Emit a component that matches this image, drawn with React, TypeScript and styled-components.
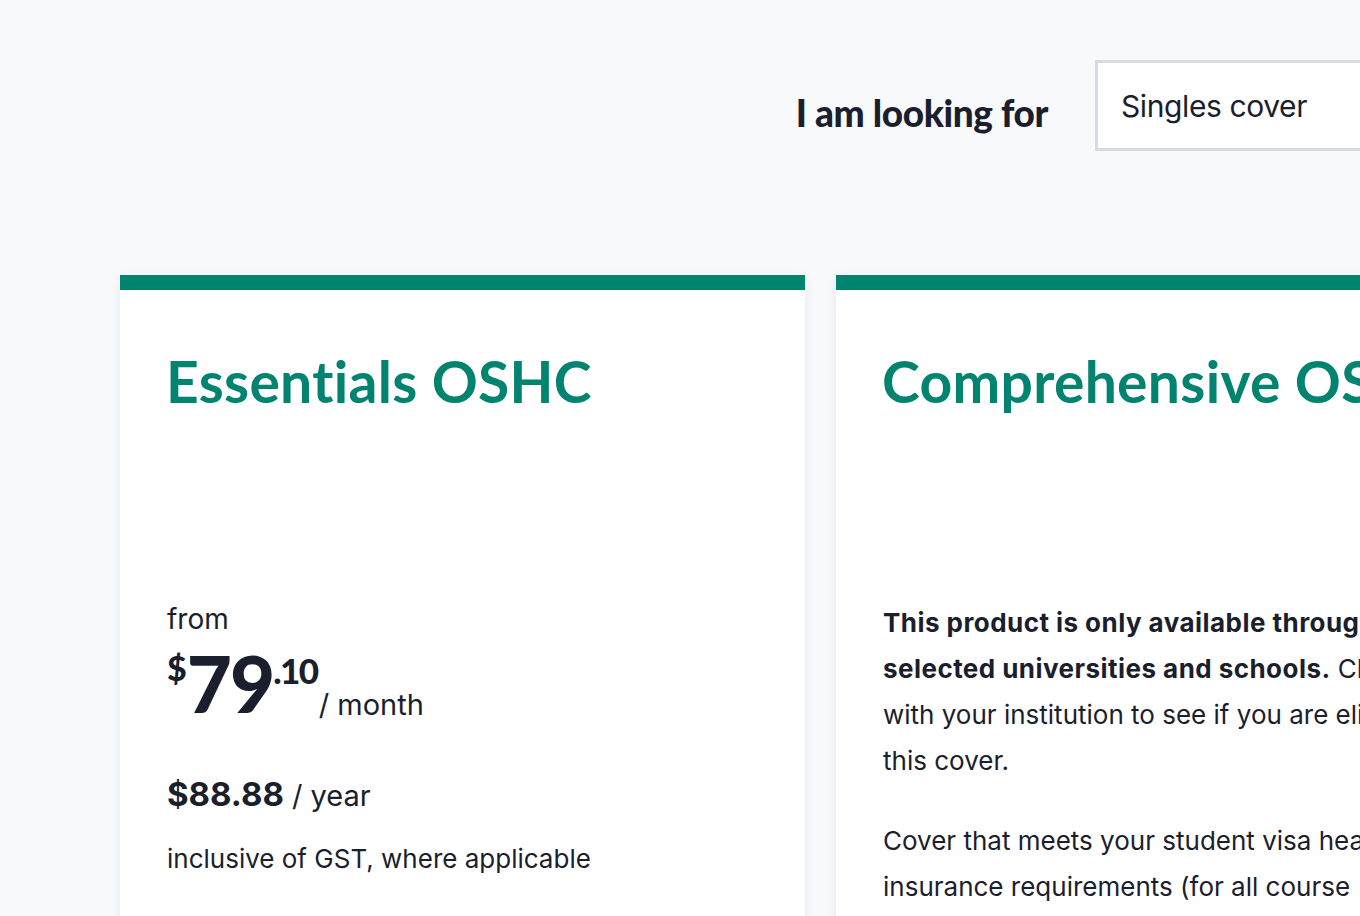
import React from "react";
import styled, { createGlobalStyle } from "styled-components";

const GlobalStyle = createGlobalStyle`
    html, body {
        margin: 0;
        padding: 0;
        background: #f8f9fb;
        overflow: hidden;
    }
    body {
        font-family: Inter, "Liberation Sans", sans-serif;
        color: #1b1e2d;
    }
    * {
        box-sizing: border-box;
    }
`;

type Plan = {
    id: string;
    name: string;
};

const plans: Plan[] = [
    { id: "essentials", name: "Essentials OSHC" },
    { id: "comprehensive", name: "Comprehensive OSHC" },
];

export default function App() {
    return (
        <>
            <GlobalStyle />
            <Page>
                <FilterRow>
                    <FilterLabel>I am looking for</FilterLabel>
                    <CoverSelect>Singles cover</CoverSelect>
                </FilterRow>
                <CardGrid>
                    <PlanCard>
                        <TitleBlock>
                            <PlanTitle>{plans[0].name}</PlanTitle>
                        </TitleBlock>
                        <EssentialsPrice />
                    </PlanCard>
                    <PlanCard>
                        <TitleBlock>
                            <PlanTitle>{plans[1].name}</PlanTitle>
                        </TitleBlock>
                        <Description>
                            <strong>
                                This product is only available through selected
                                universities and schools.
                            </strong>{" "}
                            Check with your institution to see if you are eligible
                            for this cover.
                        </Description>
                        <Description>
                            Cover that meets your student visa health insurance
                            requirements (for all course durations).
                        </Description>
                    </PlanCard>
                </CardGrid>
            </Page>
        </>
    );
}

function EssentialsPrice() {
    return (
        <PriceBlock>
            <FromLabel>from</FromLabel>
            <MonthRow>
                <Dollar>$</Dollar>
                <Whole>79</Whole>
                <Cents>.10</Cents>
                <Period>/ month</Period>
            </MonthRow>
            <YearRow>
                <YearAmount>$88.88</YearAmount>
                <YearPeriod>/ year</YearPeriod>
            </YearRow>
            <TaxNote>inclusive of GST, where applicable</TaxNote>
        </PriceBlock>
    );
}

const Page = styled.div`
    width: 1521px;
    padding: 60px 0 0 120px;
`;

// 상단 필터
const FilterRow = styled.div`
    display: flex;
    justify-content: flex-end;
    align-items: center;
    gap: 47px;
`;

const FilterLabel = styled.div`
    font-family: Lato, "Liberation Sans", sans-serif;
    font-weight: 900;
    font-size: 37px;
    letter-spacing: -0.4px;
    margin-top: 14px;
`;

const CoverSelect = styled.div`
    width: 426px;
    height: 91px;
    display: flex;
    align-items: center;
    padding: 0 23px;
    background: #ffffff;
    border: 3px solid #d8dae2;
    font-size: 30px;
    letter-spacing: -0.4px;
`;

// 플랜 카드
const CardGrid = styled.div`
    display: grid;
    grid-template-columns: 685px 685px;
    gap: 31px;
    margin-top: 124px;
`;

const PlanCard = styled.div`
    background: #ffffff;
    border-top: 15px solid #00836f;
    box-shadow: 0 2px 10px rgba(30, 40, 70, 0.08);
    padding: 57px 47px 40px;
    min-height: 700px;
`;

const TitleBlock = styled.div`
    height: 253px;
`;

const PlanTitle = styled.h2`
    margin: 0;
    font-family: Lato, "Liberation Sans", sans-serif;
    font-weight: 700;
    font-size: 57px;
    line-height: 1.2;
    letter-spacing: 0.3px;
    color: #00836f;
    white-space: nowrap;
    margin-left: -1px;
`;

const PriceBlock = styled.div`
    display: flex;
    flex-direction: column;
`;

const FromLabel = styled.div`
    font-size: 28px;
    line-height: 1.4;
`;

const MonthRow = styled.div`
    display: flex;
    align-items: flex-start;
    margin-top: 5px;
    height: 78px;
`;

const Dollar = styled.span`
    font-family: Lato, "Liberation Sans", sans-serif;
    font-weight: 900;
    font-size: 34px;
    line-height: 1;
    margin-top: 7px;
`;

const Whole = styled.span`
    font-family: Lato, "Liberation Sans", sans-serif;
    font-weight: 900;
    font-size: 78px;
    line-height: 1;
    letter-spacing: -2px;
`;

const Cents = styled.span`
    font-family: Lato, "Liberation Sans", sans-serif;
    font-weight: 900;
    font-size: 35px;
    line-height: 1;
    letter-spacing: -1.5px;
    margin-top: 9px;
`;

const Period = styled.span`
    align-self: flex-end;
    font-size: 29px;
    line-height: 1;
    margin-bottom: 3px;
    margin-left: 1px;
`;

const YearRow = styled.div`
    display: flex;
    align-items: baseline;
    gap: 8px;
    margin-top: 49px;
    line-height: 1.4;
`;

const YearAmount = styled.span`
    font-weight: 700;
    font-size: 33px;
`;

const YearPeriod = styled.span`
    font-size: 29px;
`;

const TaxNote = styled.div`
    margin-top: 24px;
    font-size: 26px;
    line-height: 1.4;
`;

// 설명 문단: 줄바꿈 폭을 맞추기 위해 오른쪽 여백을 조금 더 둔다
const Description = styled.p`
    margin: 0 8px 34px 0;
    font-size: 26px;
    line-height: 46px;
    strong {
        font-weight: 700;
        letter-spacing: 0.45px;
    }
`;
